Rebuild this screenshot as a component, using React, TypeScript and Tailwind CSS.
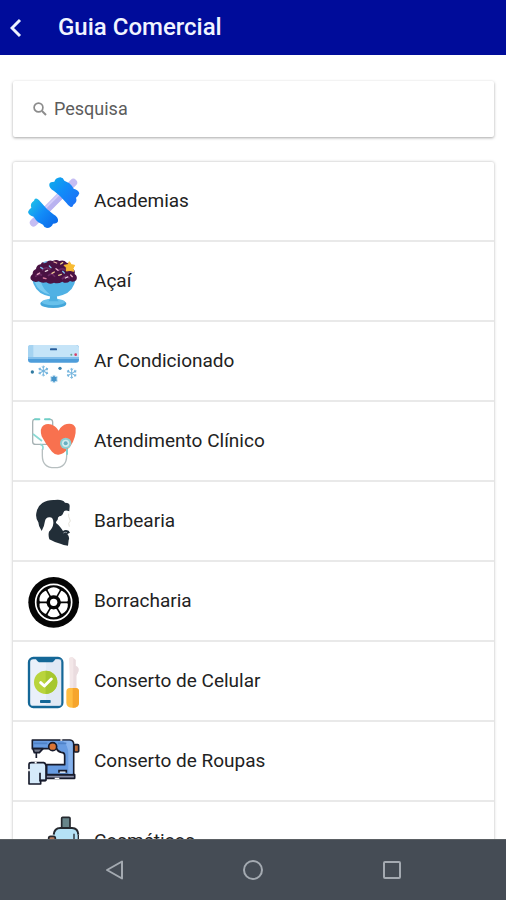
import React from 'react';

interface IconProps {
  children: React.ReactNode;
}

function CategoryIcon({ children }: IconProps) {
  return (
    <svg viewBox="0 0 153 153" className="size-[51px] shrink-0 overflow-visible" fill="none" aria-hidden="true">
      {children}
    </svg>
  );
}

const PLATE = 'M64 24 Q66 17 79 17 Q83 5 97 4 Q106 5 109 14 L124 22 Q131 28 137 38 Q151 41 154 52 Q152 60 144 65 Q149 78 136 86 Q134 95 127 92 Q121 90 116 82 Q98 59 78 45 Q62 36 64 24Z';

function DumbbellIcon() {
  return (
    <CategoryIcon>
      <defs>
        <linearGradient id="plate" x1="70" y1="20" x2="140" y2="80" gradientUnits="userSpaceOnUse">
          <stop stopColor="#10a6ee" />
          <stop offset=".45" stopColor="#128cf8" />
          <stop offset="1" stopColor="#1b74f6" />
        </linearGradient>
        <linearGradient id="plate-low" x1="140" y1="80" x2="70" y2="20" gradientUnits="userSpaceOnUse">
          <stop stopColor="#1bb8ea" />
          <stop offset=".45" stopColor="#128cf8" />
          <stop offset="1" stopColor="#0c6cea" />
        </linearGradient>
      </defs>
      <path d="M17 140 L136 20" stroke="#c5bdf3" strokeWidth="23" strokeLinecap="round" />
      <path d="M48 110 L106 52" stroke="#b9b2f0" strokeWidth="19" />
      <path d="M44 104 L100 48" stroke="#d3cdfa" strokeWidth="6" />
      <path d={PLATE} fill="url(#plate)" />
      <path d={PLATE} fill="url(#plate-low)" transform="rotate(180 77 80)" />
    </CategoryIcon>
  );
}

const SPRINKLES = [
  ['#e9a7c4', 'M28 55l7 -4'], ['#7fb7e8', 'M38 34l6 4'], ['#e7d2dd', 'M52 46l7 -3'],
  ['#d97b9e', 'M46 66l8 2'], ['#86c4ee', 'M64 30l5 5'], ['#f0c894', 'M72 52l7 -4'],
  ['#e9b0c8', 'M84 38l6 5'], ['#e0c98d', 'M92 58l8 -3'],
  ['#78b8ea', 'M104 46l5 5'], ['#eedbe3', 'M112 66l7 -3'], ['#e5a4bd', 'M128 57l5 5'],
  ['#f3b7a8', 'M78 18l8 3'], ['#f2d184', 'M98 24l6 -4'], ['#78b8ea', 'M48 20l8 -3'],
];

function AcaiIcon() {
  return (
    <CategoryIcon>
      <ellipse cx="76" cy="143" rx="39" ry="13" fill="#43a6da" />
      <ellipse cx="76" cy="138" rx="35" ry="10" fill="#68c1eb" />
      <path d="M64 110 H89 Q83 125 92 136 H61 Q70 125 64 110Z" fill="#4dafe0" />
      <path d="M12 68 H143 Q138 105 104 117 Q77 127 50 117 Q19 105 12 68Z" fill="#50b1e4" />
      <path d="M20 78 Q31 110 67 116 Q44 99 39 78Z" fill="#7acaf0" />
      <path d="M8 70 Q5 61 14 54 Q13 44 24 39 Q25 27 38 25 Q42 15 54 19 Q63 10 74 15 Q85 9 94 15 Q108 10 116 20 Q130 22 132 36 Q143 42 140 54 Q150 62 145 72 Q138 80 126 75 Q115 85 103 77 Q90 85 78 80 Q65 87 55 79 Q41 83 32 76 Q17 82 8 70Z" fill="#4a1243" />
      <path d="M22 62 Q31 51 42 58 M60 60 Q70 48 81 62 M102 70 Q113 54 125 67 M42 43 Q56 28 67 42 M91 44 Q101 35 111 42" stroke="#6b2a64" strokeWidth="5" />
      {SPRINKLES.map(([color, d]) => (
        <path key={d} d={d} stroke={color} strokeWidth="4" strokeLinecap="round" />
      ))}
      <path d="M124 17 L130 26 L140 28 L135 37 L137 46 L126 43 L115 45 L115 35 L108 28 L119 26Z" fill="#f8bb32" stroke="#f8bb32" strokeWidth="3" strokeLinejoin="round" />
    </CategoryIcon>
  );
}

function Snowflake({ x, y, r }: { x: number; y: number; r: number }) {
  return (
    <g transform={`translate(${x} ${y}) scale(${r / 15})`} stroke="#75b5de" strokeWidth="3" strokeLinecap="round">
      {[0, 60, 120, 180, 240, 300].map((angle) => (
        <path key={angle} d="M0 0V-15M-3 -13L0 -9L3 -13" transform={`rotate(${angle})`} />
      ))}
    </g>
  );
}

function AirConditionerIcon() {
  return (
    <CategoryIcon>
      <rect x="0" y="27" width="153" height="53" rx="9" fill="#4e9dda" />
      <path d="M9 27 H144 Q153 27 153 36 V65 H0 V36 Q0 27 9 27Z" fill="#c5e4f8" />
      <path d="M0 63 H153 V69 H0Z" fill="#83bfeb" />
      <path d="M0 36 Q0 27 9 27 H16 V63 H0Z" fill="#a5d3f1" />
      <rect x="66" y="37" width="21" height="6" rx="2" fill="#285d9b" />
      <circle cx="130" cy="56" r="3" fill="#67a78e" />
      <circle cx="143" cy="56" r="4" fill="#d83f67" />
      <Snowflake x={46} y={105} r={15} />
      <Snowflake x={131} y={112} r={15} />
      <Snowflake x={78} y={129} r={11} />
      <circle cx="78" cy="129" r="8" fill="#4795ca" />
      <circle cx="13" cy="108" r="5" fill="#307aa1" />
      <circle cx="96" cy="97" r="5" fill="#397fa9" />
    </CategoryIcon>
  );
}

function StethoscopeIcon() {
  return (
    <CategoryIcon>
      <path d="M28 10 H20 Q14 10 14 18 V77 Q14 85 23 85 H65 Q74 85 74 77 V18 Q74 10 66 10 H59" stroke="#a6b2b4" strokeWidth="4" />
      <path d="M21 10 H34 M51 10 H65" stroke="#70cfc7" strokeWidth="6" strokeLinecap="round" />
      <path d="M15 54 L42 75 M37 85 Q48 88 44 101" stroke="#8bd9d3" strokeWidth="5" />
      <path d="M43 99 V119 Q43 155 80 155 Q116 155 116 119 V95" stroke="#b7bfc0" strokeWidth="4" />
      <path d="M91 116 Q81 117 72 107 Q53 85 41 61 Q34 37 47 28 Q62 18 80 31 Q88 37 92 44 Q101 27 116 24 Q137 20 143 36 Q145 65 127 91 Q106 117 91 116Z" fill="#f8714f" />
      <circle cx="113" cy="82" r="17" fill="#8bced2" />
      <circle cx="113" cy="82" r="11" fill="#d2ebed" />
      <circle cx="113" cy="82" r="6" fill="#67afc1" />
      <path d="M117 99 V116" stroke="#82cfd0" strokeWidth="6" />
    </CategoryIcon>
  );
}

function BeardIcon() {
  return (
    <CategoryIcon>
      <path d="M41 105 Q31 91 31 79 Q22 66 25 51 Q28 31 43 21 Q58 11 80 12 Q103 9 111 20 Q126 20 125 31 L124 46 Q109 39 106 50 Q103 60 94 61 Q89 64 89 71 Q83 77 84 81 Q92 86 97 94 Q101 99 105 105 Q112 100 122 104 L126 110 L118 114 Q126 124 122 132 L120 149 Q106 147 97 143 Q81 140 64 130 Q60 118 63 107 Q75 96 76 82 Q77 64 65 64 Q54 63 51 75 Q50 87 41 105Z" fill="#222e38" />
      <path d="M106 111 Q112 107 117 110" stroke="#8c959c" strokeWidth="3" />
      <path d="M122 53 V61 L127 75 L122 82 L124 92" stroke="#e4e2da" strokeWidth="3" />
    </CategoryIcon>
  );
}

function TireIcon() {
  return (
    <CategoryIcon>
      <circle cx="77" cy="79" r="76" fill="#050505" />
      <circle cx="77" cy="79" r="54" stroke="#fff" strokeWidth="5" />
      {[0, 60, 120, 180, 240, 300].map((angle) => (
        <path
          key={angle}
          d="M62 42 Q77 32 92 42 L84 56 Q77 53 70 56Z"
          fill="#fff"
          stroke="#fff"
          strokeWidth="6"
          strokeLinejoin="round"
          transform={`rotate(${angle} 77 79)`}
        />
      ))}
      <circle cx="77" cy="79" r="11" fill="#fff" />
    </CategoryIcon>
  );
}

function PhoneRepairIcon() {
  return (
    <CategoryIcon>
      <rect x="3" y="6" width="100" height="147" rx="13" fill="#eaf0fa" stroke="#146797" strokeWidth="7" />
      <path d="M54 10 H100 V149 H54Z" fill="#d8e2ef" opacity=".5" />
      <path d="M22 5 H84 Q78 19 69 19 H37 Q28 19 22 5Z" fill="#146797" />
      <circle cx="53" cy="79" r="35" fill="#b9d43c" />
      <path d="M53 44 A35 35 0 0 1 53 114Z" fill="#a6c72f" />
      <path d="M38 80 L49 90 L70 69" stroke="#fff" strokeWidth="9" strokeLinecap="round" strokeLinejoin="round" />
      <rect x="36" y="132" width="32" height="9" rx="2" fill="#146797" />
      <path d="M123 7 Q126 2 134 3 L143 12 V29 Q155 34 151 47 L145 59 V98 H125 V57Z" fill="#f3e7e8" />
      <path d="M136 6 L143 12 V29 Q155 34 151 47 L145 59 V98 H136Z" fill="#eadcdf" />
      <path d="M115 107 Q115 96 125 96 H143 Q153 96 153 107 V140 Q153 155 134 155 Q115 155 115 140Z" fill="#ffbd41" />
      <path d="M134 96 H143 Q153 96 153 107 V140 Q153 155 134 155Z" fill="#f6a52d" />
    </CategoryIcon>
  );
}

function SewingMachineIcon() {
  return (
    <CategoryIcon>
      <g stroke="#171b2c" strokeWidth="5" strokeLinejoin="round">
        <rect x="138" y="26" width="14" height="22" rx="3" fill="#b86835" />
        <path d="M52 116 H140 V127 H52Z" fill="#898fa9" />
        <path d="M13 12 H126 Q137 13 137 25 V116 H56 V86 H110 V59 Q110 49 100 49 Q90 48 86 38 H13Z" fill="#679be1" />
        <path d="M15 38 H45 L34 50 H19Z" fill="#737989" />
        <path d="M25 51 V66" />
        <circle cx="74" cy="32" r="12" fill="#db7434" />
      </g>
      <path d="M104 14 H124 Q134 15 134 25 V113 H121 V54 Q121 27 104 14Z" fill="#86b2ec" />
      <path d="M17 22 H58 M90 22 H115" stroke="#4f82c8" strokeWidth="5" />
      <path d="M93 110 V104 H115 V110" stroke="#171b2c" strokeWidth="5" fill="#fff" />
      <path d="M80 127 H94 M97 12 H103" stroke="#fff" strokeWidth="4" />
      <path d="M3 85 Q3 80 10 80 H47 Q54 82 54 90 V133 H38 V144 H3Z" fill="#d5eafa" stroke="#171b2c" strokeWidth="5" strokeLinejoin="round" />
      <path d="M36 110 V134 H53" stroke="#171b2c" strokeWidth="5" />
      <path d="M20 80 H26 M3 99 V106" stroke="#fff" strokeWidth="5" />
    </CategoryIcon>
  );
}

function CosmeticsIcon() {
  return (
    <CategoryIcon>
      <rect x="101" y="4" width="25" height="32" rx="3" fill="#67858a" stroke="#25282e" strokeWidth="5" />
      <path d="M77 153 V53 Q79 37 97 36 H132 Q149 37 151 53 V153Z" fill="#b5e2f5" />
      <path d="M77 56 Q79 36 97 36 H132 Q150 37 151 56" stroke="#25282e" strokeWidth="6" />
      <path d="M138 53 V153 M151 56 V153" stroke="#25282e" strokeWidth="4" />
      <rect x="62" y="61" width="20" height="92" rx="6" fill="#b87c5d" stroke="#25282e" strokeWidth="5" />
    </CategoryIcon>
  );
}

const categories = [
  { name: 'Academias', Icon: DumbbellIcon },
  { name: 'Açaí', Icon: AcaiIcon },
  { name: 'Ar Condicionado', Icon: AirConditionerIcon },
  { name: 'Atendimento Clínico', Icon: StethoscopeIcon },
  { name: 'Barbearia', Icon: BeardIcon },
  { name: 'Borracharia', Icon: TireIcon },
  { name: 'Conserto de Celular', Icon: PhoneRepairIcon },
  { name: 'Conserto de Roupas', Icon: SewingMachineIcon },
  { name: 'Cosméticos', Icon: CosmeticsIcon },
];

function Header() {
  return (
    <header className="flex shrink-0 items-center gap-6 bg-[#000c9a] px-1 py-3">
      <button type="button" aria-label="Voltar" className="flex h-[31px] w-[30px] items-center pl-1.5">
        <svg viewBox="0 0 12 20" className="h-5 w-3" fill="none" aria-hidden="true">
          <path d="M10 2 L2 10 L10 18" stroke="#edf2ff" strokeWidth="3" />
        </svg>
      </button>
      <h1 className="text-2xl leading-[31px] font-medium text-[#f1f4ff]">Guia Comercial</h1>
    </header>
  );
}

function SearchBox() {
  return (
    <label className="flex items-center gap-[7px] rounded-xs bg-white px-5 py-4 shadow-[0_1px_3px_rgba(0,0,0,0.35)]">
      <svg viewBox="0 0 14 14" className="size-3.5 shrink-0" fill="none" stroke="#8c8c8c" aria-hidden="true">
        <circle cx="5.5" cy="5.5" r="4.4" strokeWidth="1.7" />
        <path d="M9 9 L13 13" strokeWidth="2" />
      </svg>
      <input
        type="text"
        aria-label="Pesquisa"
        placeholder="Pesquisa"
        className="min-w-0 flex-1 text-lg leading-6 text-[#333] outline-none placeholder:text-[#5c5c5c]"
      />
    </label>
  );
}

function NavigationBar() {
  return (
    <nav className="flex h-[61px] shrink-0 items-center justify-center gap-[115px] border-t border-[#5b6064] bg-[#454c55] text-[#a4aab1]">
      <button type="button" aria-label="Voltar à tela anterior">
        <svg viewBox="0 0 24 24" className="size-6" fill="none" stroke="currentColor" strokeWidth="2" aria-hidden="true">
          <path d="M20 3.5 V20.5 L5 12Z" strokeLinejoin="round" />
        </svg>
      </button>
      <button type="button" aria-label="Tela inicial">
        <svg viewBox="0 0 24 24" className="size-6" fill="none" stroke="currentColor" strokeWidth="2" aria-hidden="true">
          <circle cx="12" cy="12" r="9" />
        </svg>
      </button>
      <button type="button" aria-label="Aplicativos recentes">
        <svg viewBox="0 0 24 24" className="size-6" fill="none" stroke="currentColor" strokeWidth="2" aria-hidden="true">
          <rect x="4" y="4" width="16" height="16" rx="1" />
        </svg>
      </button>
    </nav>
  );
}

export default function App() {
  return (
    <div className="flex h-screen flex-col bg-white font-[Roboto,sans-serif]">
      <Header />
      <main className="flex min-h-0 flex-1 flex-col gap-[25px] overflow-y-auto pt-[26px] pr-3 pl-[13px] [scrollbar-width:none]">
        <SearchBox />
        <ul className="rounded-xs bg-white shadow-[0_0_3px_rgba(0,0,0,0.3)]">
          {categories.map(({ name, Icon }) => (
            <li key={name} className="border-b-2 border-[#e9e9e9]">
              <a href="#" className="flex items-center gap-[15px] px-[15px] pt-3.5 pb-[13px] text-[19px] text-[#222]">
                <Icon />
                <span>{name}</span>
              </a>
            </li>
          ))}
        </ul>
      </main>
      <NavigationBar />
    </div>
  );
}
